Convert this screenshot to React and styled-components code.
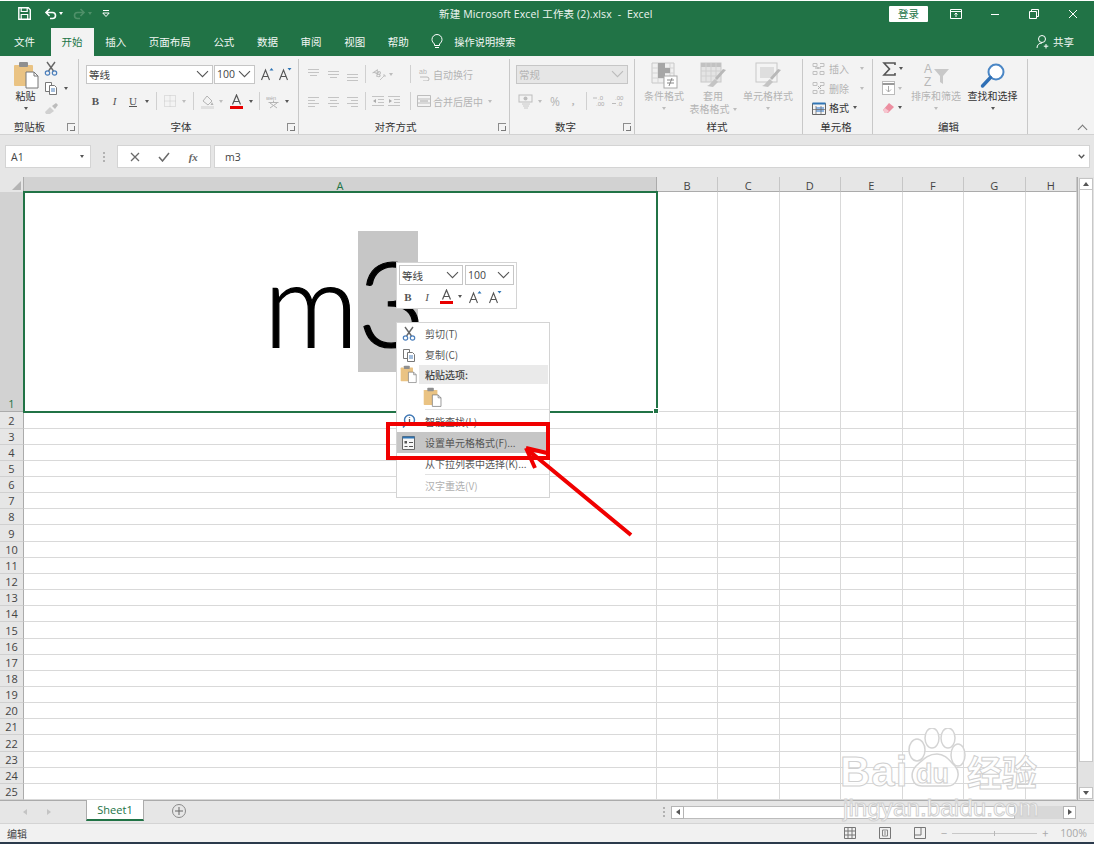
import React from "react";
import styled, { createGlobalStyle } from "styled-components";

const CJK = `"Noto Sans CJK SC", "Noto Sans", sans-serif`;
const GREEN = "#217346";
const DIM = "#b4b4b4";

const Global = createGlobalStyle`
  html, body { margin: 0; padding: 0; background: #fff; }
  body { font-family: ${CJK}; overflow: hidden; }
`;

const Page = styled.div`
  width: 1094px;
  height: 844px;
  padding-top: 1px;
  box-sizing: border-box;
  display: flex;
  flex-direction: column;
  position: relative;
  overflow: hidden;
`;

/* title bar */
const TitleBar = styled.div`
  height: 26px;
  background: ${GREEN};
  display: flex;
  align-items: center;
  position: relative;
  color: #fff;
  font-size: 10.5px;
`;
const QuickAccess = styled.div`
  display: flex;
  align-items: center;
  padding-left: 18px;
  gap: 5px;
`;
const DocTitle = styled.div`
  position: absolute;
  left: 439px;
  top: 5px;
  white-space: pre;
  line-height: 16px;
  letter-spacing: 0.15px;
  color: #eef5f0;
  font-family: "Open Sans", "Noto Sans CJK SC", sans-serif;
`;
const WindowControls = styled.div`
  margin-left: auto;
  display: flex;
  align-items: center;
  padding-right: 2px;
`;
const SignIn = styled.div`
  width: 39px;
  height: 16px;
  background: #fff;
  color: ${GREEN};
  font-size: 10.5px;
  line-height: 16px;
  text-align: center;
  margin-right: 8px;
  border-radius: 1px;
`;
const WinBtn = styled.div`
  width: 39px;
  display: flex;
  justify-content: center;
`;

/* tabs */
const TabBar = styled.div`
  height: 29px;
  background: ${GREEN};
  display: flex;
  align-items: flex-end;
  padding-left: 3px;
  gap: 0.6px;
  color: #f2f7f4;
  font-size: 10.5px;
`;
const Tab = styled.div`
  height: 28px;
  line-height: 28px;
  padding: 0 11px;
  margin-right: ${(p) => p.$mr || 0}px;
  background: ${(p) => (p.$active ? "#f3f3f3" : "transparent")};
  color: ${(p) => (p.$active ? GREEN : "inherit")};
`;
const TellMe = styled.div`
  display: flex;
  align-items: center;
  gap: 11px;
  height: 28px;
  margin-left: 11px;
  font-size: 10.2px;
`;
const Share = styled.div`
  margin-left: auto;
  margin-right: 20px;
  height: 28px;
  display: flex;
  align-items: center;
  gap: 3px;
`;

/* ribbon */
const Ribbon = styled.div`
  height: 80px;
  box-sizing: border-box;
  background: #f3f3f3;
  border-bottom: 1px solid #d2d2d2;
  display: flex;
  position: relative;
  font-size: 10px;
  color: #444;
`;
const Group = styled.div`
  width: ${(p) => p.$w}px;
  height: 75px;
  margin-top: 3px;
  box-sizing: border-box;
  border-right: 1px solid #c8c8c8;
  display: flex;
  flex-direction: column;
  flex: none;
`;
const GroupBody = styled.div`
  flex: 1;
  min-height: 0;
  display: flex;
  padding-left: ${(p) => p.$pl || 0}px;
`;
const GroupFoot = styled.div`
  height: 14px;
  display: grid;
  grid-template-columns: 1fr auto 1fr;
  align-items: center;
  font-size: 10.5px;
  color: #333;
  line-height: 14px;
  padding-right: 3px;
`;
const GroupName = styled.div`
  grid-column: 2;
  margin-right: ${(p) => (p.$shift || 0) * 2}px;
`;
const Launcher = styled.div`
  grid-column: 3;
  justify-self: end;
  width: 7px;
  height: 7px;
  border-left: 1px solid #8c8c8c;
  border-top: 1px solid #8c8c8c;
  &::after {
    content: "";
    display: block;
    width: 4px;
    height: 4px;
    margin: 2px 0 0 2px;
    border-right: 1px solid #7a7a7a;
    border-bottom: 1px solid #7a7a7a;
  }
`;
const Stack = styled.div`
  display: flex;
  flex-direction: column;
  padding-top: 6px;
  gap: 9px;
`;
const Row = styled.div`
  display: flex;
  align-items: center;
  height: ${(p) => p.$h || 17}px;
`;
const Combo = styled.div`
  width: ${(p) => p.$w}px;
  height: 19px;
  box-sizing: border-box;
  background: ${(p) => (p.$off ? "#e6e6e6" : "#fff")};
  border: 1px solid #c6c6c6;
  color: ${(p) => (p.$off ? DIM : "#444")};
  display: flex;
  align-items: center;
  justify-content: space-between;
  padding: 0 3px 0 2px;
  font-size: ${(p) => p.$fs || 10.5}px;
  margin-right: ${(p) => p.$mr ?? 0}px;
  flex: none;
`;
const Tool = styled.div`
  width: ${(p) => p.$w || 18}px;
  flex: none;
  display: flex;
  justify-content: center;
  align-items: center;
  font-family: "Liberation Serif", serif;
  font-size: 11px;
  font-weight: ${(p) => (p.$bold ? 700 : 400)};
  font-style: ${(p) => (p.$italic ? "italic" : "normal")};
  text-decoration: ${(p) => (p.$under ? "underline" : "none")};
  color: ${(p) => (p.$off ? DIM : "#555")};
`;
const PercentTool = styled(Tool)`
  font-family: "Open Sans", sans-serif;
  font-size: 12px;
`;
const Caret = styled.span`
  display: inline-block;
  width: 0;
  height: 0;
  border-left: 2.5px solid transparent;
  border-right: 2.5px solid transparent;
  border-top: 3px solid ${(p) => p.$c || (p.$off ? "#bdbdbd" : "#555")};
  margin: ${(p) => p.$m || "0"};
`;
const CaretBox = styled.div`
  width: ${(p) => p.$w || 10}px;
  flex: none;
  display: flex;
  justify-content: center;
`;
const Sep = styled.div`
  width: 1px;
  height: 18px;
  background: #d0d0d0;
  margin: 0 4px;
  flex: none;
`;
const Spacer = styled.div`
  width: ${(p) => p.$w}px;
  flex: ${(p) => (p.$grow ? 1 : "none")};
`;
const Dim = styled.span`
  color: ${DIM};
  white-space: nowrap;
  width: ${(p) => p.$w}px;
  flex: none;
`;
const BigBtn = styled.div`
  width: ${(p) => p.$w}px;
  flex: none;
  display: flex;
  flex-direction: column;
  align-items: center;
  padding-top: 3px;
  color: ${(p) => (p.$off ? DIM : "#333")};
  line-height: 13px;
  white-space: nowrap;
`;
const BigIcon = styled.div`
  height: 27px;
  display: flex;
  align-items: center;
  justify-content: center;
`;
const SmallCol = styled.div`
  display: flex;
  flex-direction: column;
  width: ${(p) => p.$w}px;
  flex: none;
`;
const SmallRow = styled.div`
  height: 19.5px;
  display: flex;
  align-items: center;
  gap: 3px;
  color: ${(p) => (p.$off ? DIM : "#333")};
  white-space: nowrap;
`;
const Collapse = styled.div`
  position: absolute;
  right: 8px;
  bottom: 1px;
  width: 6px;
  height: 6px;
  border-left: 1px solid #777;
  border-top: 1px solid #777;
  transform: rotate(45deg);
`;

/* formula bar */
const FormulaBar = styled.div`
  height: 42px;
  box-sizing: border-box;
  background: #e6e6e6;
  padding: 10px 4px 9px 5px;
  display: flex;
  align-items: stretch;
  font-size: 10.5px;
  color: #444;
`;
const FBox = styled.div`
  background: #fff;
  border: 1px solid #d4d4d4;
  box-sizing: border-box;
  display: flex;
  align-items: center;
  width: ${(p) => (p.$w ? `${p.$w}px` : "auto")};
  flex: ${(p) => (p.$w ? "none" : 1)};
  justify-content: ${(p) => p.$justify || "flex-start"};
  padding: ${(p) => p.$pad || "0"};
  margin-right: ${(p) => p.$mr || 0}px;
`;
const Grip = styled.div`
  width: 26px;
  flex: none;
  display: flex;
  flex-direction: column;
  align-items: center;
  justify-content: center;
  gap: 2px;
  i {
    width: 2px;
    height: 2px;
    background: #b2b2b2;
    display: block;
  }
`;
const LatinText = styled.span`
  font-family: "Open Sans", sans-serif;
  font-size: 10.5px;
`;
const FxLabel = styled.span`
  font-family: "Liberation Serif", serif;
  font-style: italic;
  font-size: 11px;
  font-weight: 700;
  color: #666;
`;

/* worksheet */
const Workspace = styled.div`
  height: 623px;
  display: flex;
  background: #e6e6e6;
`;
const Sheet = styled.div`
  width: 1078px;
  flex: none;
  display: grid;
  grid-template-columns: 24px 633px 61px 61.5px 61.5px 61.5px 61.5px 61.5px 51.5px;
  grid-template-rows: 15px 220px repeat(24, 16.167px);
  background: #fff;
  border-right: 1px solid #ababab;
  box-sizing: border-box;
`;
const Corner = styled.div`
  background: #e6e6e6;
  border-right: 1px solid #ababab;
  display: flex;
  align-items: flex-end;
  justify-content: flex-end;
  padding: 0 2px 2px 0;
  box-sizing: border-box;
  &::after {
    content: "";
    width: 0;
    height: 0;
    border-left: 9px solid transparent;
    border-bottom: 9px solid #b4b4b4;
  }
`;
const ColHead = styled.div`
  background: ${(p) => (p.$sel ? "#d2d2d2" : "#e6e6e6")};
  border-right: 1px solid ${(p) => (p.$sel ? "#ababab" : "#c6c6c6")};
  border-bottom: 1px solid #ababab;
  box-sizing: border-box;
  font-family: "Open Sans", sans-serif;
  font-size: 11px;
  line-height: 17px;
  text-align: center;
  color: ${(p) => (p.$sel ? GREEN : "#444")};
`;
const RowHead = styled.div`
  background: ${(p) => (p.$sel ? "#d2d2d2" : "#e6e6e6")};
  border-right: 1px solid #ababab;
  border-bottom: 1px solid ${(p) => (p.$sel ? "#ababab" : "#d0d0d0")};
  box-sizing: border-box;
  font-family: "Open Sans", sans-serif;
  font-size: 11px;
  color: ${(p) => (p.$sel ? GREEN : "#444")};
  display: flex;
  align-items: flex-end;
  justify-content: center;
  line-height: 15px;
  overflow: hidden;
`;
const Cell = styled.div`
  border-right: 1px solid #d9d9d9;
  border-bottom: 1px solid #d9d9d9;
  box-sizing: border-box;
`;
const ActiveCell = styled.div`
  grid-column: 2;
  border: 2px solid ${GREEN};
  margin: -1px;
  background: #fff;
  display: flex;
  align-items: center;
  justify-content: center;
  position: relative;
  z-index: 1;
  color: #000;
  font-family: "Lato", sans-serif;
  font-weight: 300;
  font-size: 118px;
  line-height: 141px;
  -webkit-text-stroke: 1.2px #000;
  &::after {
    content: "";
    position: absolute;
    right: -3px;
    bottom: -3px;
    width: 4px;
    height: 4px;
    background: ${GREEN};
    border: 1px solid #fff;
  }
`;
const CellText = styled.div`
  display: flex;
  margin: -2px 0 0 0;
`;
const Selected = styled.span`
  display: block;
  width: 60px;
  height: 141px;
  text-align: center;
  background: #c6c6c6;
  margin-left: -1px;
`;
const VScroll = styled.div`
  width: 16px;
  flex: none;
  background: #e2e2e2;
  display: flex;
  flex-direction: column;
  padding: 1px;
  box-sizing: border-box;
`;
const ScrollBtn = styled.div`
  height: 12px;
  background: #fff;
  border: 1px solid #c4c4c4;
  box-sizing: border-box;
  display: flex;
  align-items: center;
  justify-content: center;
  flex: none;
`;
const VThumb = styled.div`
  height: 572px;
  background: #fff;
  border: 1px solid #c8c8c8;
  border-top: 0;
  box-sizing: border-box;
  flex: none;
`;
const TriUp = styled.span`
  width: 0;
  height: 0;
  border-left: 3px solid transparent;
  border-right: 3px solid transparent;
  border-bottom: 4px solid #555;
`;
const TriDown = styled(TriUp)`
  border-bottom: 0;
  border-top: 4px solid #555;
`;
const TriLeft = styled.span`
  width: 0;
  height: 0;
  border-top: 3px solid transparent;
  border-bottom: 3px solid transparent;
  border-right: 4px solid ${(p) => p.$c || "#555"};
`;
const TriRight = styled.span`
  width: 0;
  height: 0;
  border-top: 3px solid transparent;
  border-bottom: 3px solid transparent;
  border-left: 4px solid ${(p) => p.$c || "#555"};
`;

/* sheet tabs + status */
const SheetBar = styled.div`
  height: 23px;
  box-sizing: border-box;
  background: #e6e6e6;
  border-top: 1px solid #ababab;
  display: flex;
  align-items: flex-start;
`;
const SheetNav = styled.div`
  width: 86px;
  flex: none;
  height: 22px;
  display: flex;
  align-items: center;
  padding-left: 23px;
  gap: 20px;
  box-sizing: border-box;
`;
const SheetTab = styled.div`
  width: 58px;
  height: 21px;
  flex: none;
  margin-top: -1px;
  box-sizing: border-box;
  background: #fff;
  border-left: 1px solid #ababab;
  border-right: 1px solid #ababab;
  border-bottom: 2px solid ${GREEN};
  color: ${GREEN};
  font-family: "Open Sans", sans-serif;
  font-size: 11px;
  line-height: 20px;
  text-align: center;
`;
const AddSheet = styled.div`
  margin-left: 28px;
  margin-top: 3px;
  width: 14px;
  height: 14px;
  flex: none;
  border: 1px solid #8a8a8a;
  border-radius: 50%;
  box-sizing: border-box;
  display: flex;
  align-items: center;
  justify-content: center;
`;
const HScrollWrap = styled.div`
  margin-left: auto;
  display: flex;
  align-items: center;
  height: 22px;
  padding-right: 18px;
`;
const HGrip = styled(Grip)`
  width: 14px;
`;
const HScroll = styled.div`
  width: 405px;
  height: 13px;
  background: #d8d8d8;
  display: flex;
  align-items: stretch;
`;
const HBtn = styled.div`
  width: 13px;
  flex: none;
  background: #fff;
  border: 1px solid #b4b4b4;
  box-sizing: border-box;
  display: flex;
  align-items: center;
  justify-content: center;
`;
const HThumb = styled.div`
  width: 331px;
  flex: none;
  background: #fff;
  border: 1px solid #bcbcbc;
  border-left: 0;
  box-sizing: border-box;
`;
const StatusBar = styled.div`
  height: 19px;
  box-sizing: border-box;
  background: #f1f1f1;
  border-top: 1px solid #d4d4d4;
  display: flex;
  align-items: center;
  padding-left: 7px;
  font-size: 10px;
  color: #444;
`;
const ViewIcons = styled.div`
  margin-left: auto;
  display: flex;
  align-items: center;
  gap: 23px;
  margin-right: 15px;
`;
const ZoomCtl = styled.div`
  display: flex;
  align-items: center;
  color: #aaa;
  font-size: 11px;
  padding-right: 7px;
`;
const ZoomTrack = styled.div`
  width: 85px;
  height: 1px;
  background: #c8c8c8;
  margin: 0 5px;
  position: relative;
  &::after {
    content: "";
    position: absolute;
    left: 42px;
    top: -2px;
    width: 1px;
    height: 5px;
    background: #b8b8b8;
  }
`;
const ZoomPct = styled.span`
  font-family: "Open Sans", sans-serif;
  font-size: 10.5px;
  margin-left: 12px;
  color: #a8a8a8;
`;
const BottomEdge = styled.div`
  height: 2px;
  background: #2b3a4c;
`;

/* mini toolbar */
const MiniBar = styled.div`
  position: absolute;
  left: 396px;
  top: 262px;
  width: 121px;
  height: 47px;
  box-sizing: border-box;
  background: #fff;
  border: 1px solid #d4d4d4;
  padding: 2px;
  z-index: 3;
  font-size: 10.5px;
  color: #444;
  display: flex;
  flex-direction: column;
  gap: 3px;
`;
const MiniRow = styled.div`
  display: flex;
  align-items: center;
  height: ${(p) => p.$h || 17}px;
`;
const MiniCombo = styled(Combo)`
  height: 20px;
  margin-right: 2px;
`;

/* context menu */
const Menu = styled.div`
  position: absolute;
  left: 396px;
  top: 322px;
  width: 154px;
  height: 176px;
  box-sizing: border-box;
  background: #fff;
  border: 1px solid #d4d4d4;
  z-index: 3;
  font-size: 10px;
  color: #555;
`;
const MenuItem = styled.div`
  height: ${(p) => p.$h || 21}px;
  display: flex;
  align-items: center;
  background: ${(p) => (p.$hi ? "#c6c6c6" : "transparent")};
  color: ${(p) => (p.$off ? "#b0b0b0" : "inherit")};
  white-space: nowrap;
`;
const MenuIcon = styled.div`
  width: 21px;
  flex: none;
  display: flex;
  justify-content: center;
  padding-left: 1px;
`;
const MenuText = styled.span`
  margin-left: 6px;
  flex: 1;
`;
const MenuHead = styled.div`
  flex: 1;
  align-self: stretch;
  display: flex;
  align-items: center;
  background: #eaeaea;
  padding-left: 6px;
  margin-right: 1px;
  font-weight: 500;
  color: #444;
`;
const PasteSlot = styled.div`
  padding: 3px 0 0 26px;
  height: 25px;
  box-sizing: border-box;
`;
const MenuSep = styled.div`
  height: 1px;
  margin-left: 28px;
  background: #e2e2e2;
`;

/* annotations */
const RedBox = styled.div`
  position: absolute;
  left: 386px;
  top: 422px;
  width: 164px;
  height: 38px;
  box-sizing: border-box;
  border: 4px solid #f00000;
  z-index: 4;
`;
const Annotation = styled.svg`
  position: absolute;
  left: 515px;
  top: 440px;
  z-index: 5;
`;
const Watermark = styled.div`
  position: absolute;
  left: 840px;
  top: 728px;
  width: 200px;
  height: 96px;
  z-index: 6;
  pointer-events: none;
  color: rgba(255, 255, 255, 0.85);
  -webkit-text-stroke: 1px #d0d0d0;
  font-family: "Liberation Sans", sans-serif;
  font-weight: 700;
`;
const Paw = styled.svg`
  position: absolute;
  left: 60px;
  top: 0;
`;
const WmBai = styled.span`
  position: absolute;
  left: 0;
  top: 20px;
  font-size: 42px;
  line-height: 48px;
  letter-spacing: 1px;
`;
const WmDu = styled.span`
  position: absolute;
  left: 76px;
  top: 31px;
  font-size: 27px;
  line-height: 30px;
`;
const WmJy = styled.span`
  position: absolute;
  left: 127px;
  top: 22px;
  font-family: ${CJK};
  font-size: 35px;
  line-height: 42px;
  white-space: nowrap;
`;
const WmUrl = styled.span`
  position: absolute;
  left: 3px;
  top: 66px;
  font-size: 24.3px;
  line-height: 28px;
  font-weight: 400;
  white-space: nowrap;
`;

/* icons */
const Svg = ({ w = 14, h = 14, children }) => (
  <svg width={w} height={h} viewBox={`0 0 ${w} ${h}`} fill="none">
    {children}
  </svg>
);
const Lines = ({ kind, c = "#c4c4c4" }) => {
  const rows = {
    top: [[1, 12, 2], [1, 12, 5], [3, 10, 8]],
    mid: [[1, 12, 4], [1, 12, 7], [3, 10, 10]],
    bot: [[1, 12, 7], [1, 12, 10], [1, 12, 13]],
    left: [[1, 12, 3], [1, 8, 6], [1, 12, 9], [1, 8, 12]],
    center: [[1, 12, 3], [3, 10, 6], [1, 12, 9], [3, 10, 12]],
    right: [[1, 12, 3], [5, 12, 6], [1, 12, 9], [5, 12, 12]],
  }[kind];
  return (
    <Svg>
      {rows.map(([a, b, y], i) => (
        <path key={i} d={`M${a} ${y + 0.5}H${b}`} stroke={c} />
      ))}
    </Svg>
  );
};
const Clipboard = ({ s = 1 }) => (
  <svg width={26 * s} height={28 * s} viewBox="0 0 26 28">
    <rect x="1" y="4" width="19" height="21" rx="1" fill="#eac383" />
    <rect x="6" y="1" width="9" height="5" rx="1" fill="#8f8f8f" />
    <path d="M13 11h8l4 4v12H13z" fill="#fff" stroke="#777" />
    <path d="M21 11v4h4" stroke="#777" fill="none" />
  </svg>
);
const Scissors = ({ c = "#4a7ebb" }) => (
  <Svg w={14} h={15}>
    <path d="M3 1l6.5 9M11 1L4.5 10" stroke="#666" strokeWidth="1.4" />
    <circle cx="3.5" cy="12" r="2.2" stroke={c} strokeWidth="1.2" />
    <circle cx="10.5" cy="12" r="2.2" stroke={c} strokeWidth="1.2" />
  </Svg>
);
const CopyIcon = () => (
  <Svg w={14} h={14}>
    <path d="M1.5 1.5h6v9h-6z" stroke="#777" fill="#fff" />
    <path d="M5.5 4.5h5l2 2v7h-7z" stroke="#777" fill="#fff" />
    <path d="M7 8h4M7 10h4" stroke="#4a7ebb" />
  </Svg>
);
const Brush = () => (
  <Svg w={15} h={14}>
    <path d="M1 11l5-5 4 4-4 3H2z" fill="#d0d0d0" />
    <path d="M8 5l4-3 2 2-3 4z" fill="#bcbcbc" />
  </Svg>
);
const GrowFont = ({ down }) => (
  <Svg w={14} h={14}>
    <path d="M1.5 13L5.5 3l4 10M3 9.5h5" stroke="#555" strokeWidth="1.1" />
    <path d={down ? "M9.5 1h4L11.5 3.5z" : "M9.5 3.5h4L11.5 1z"} fill="#2f75b5" />
  </Svg>
);
const Borders = () => (
  <Svg>
    <path d="M1.5 1.5h11v11h-11zM7 1.5v11M1.5 7h11" stroke="#c8c8c8" strokeDasharray="1 1" />
  </Svg>
);
const FillIcon = () => (
  <Svg w={15} h={15}>
    <path d="M3 7l4-5 5 5-4 4z" stroke={DIM} fill="#f3f3f3" />
    <path d="M12 8l1.5 3h-3z" fill={DIM} />
    <rect x="1" y="12" width="13" height="3" fill="#e0e0e0" />
  </Svg>
);
const FontColor = () => (
  <Svg w={15} h={15}>
    <path d="M3.500 10.500L7.500 1l4 9.500M5 7.500h5" stroke="#555" strokeWidth="1.2" />
    <rect x="1" y="12" width="13" height="3" fill="#e80000" />
  </Svg>
);
const Phonetic = () => (
  <Svg w={15} h={15}>
    <text x="0" y="5.5" fontSize="5.5" fill="#aaa" fontFamily="Liberation Sans">wén</text>
    <path d="M7.5 6.5v1.5M2.5 8.5h10M4 9l7 5M11 9l-7 5" stroke="#b4b4b4" />
  </Svg>
);
const Orient = () => (
  <Svg w={15} h={14}>
    <path d="M2 8l3-5 2 5M3 6.500h3M7 9V4c2-1 3 1 1.500 2.500C10.500 6 11 9 7 9z" stroke="#bbb" transform="rotate(25 6 6)" />
    <path d="M9 13l5-5M12 8h2v2" stroke="#c4c4c4" />
  </Svg>
);
const Indent = ({ back }) => (
  <Svg>
    <path d="M1 2.5h12M7 5.5h6M7 8.5h6M1 11.5h12" stroke="#c4c4c4" />
    <path d={back ? "M5 5l-3 2 3 2z" : "M2 5l3 2-3 2z"} fill="#aaa" />
  </Svg>
);
const WrapIcon = () => (
  <Svg w={13} h={13}>
    <text x="1" y="6" fontSize="7" fill="#b8b8b8" fontFamily="Liberation Sans">ab</text>
    <path d="M2 9h7a2 2 0 010 4H5" stroke="#b8b8b8" />
  </Svg>
);
const MergeIcon = () => (
  <Svg w={14} h={12}>
    <path d="M.5.5h13v11H.5zM.5 4h13M.5 8h13" stroke="#bdbdbd" />
    <path d="M3 6h8" stroke="#aaa" />
  </Svg>
);
const Money = () => (
  <Svg w={15} h={15}>
    <rect x="1" y="1" width="13" height="7" stroke="#bdbdbd" />
    <circle cx="7.5" cy="4.5" r="2" fill="#bdbdbd" />
    <path d="M4 10h8M5 12h6M6 14h4" stroke="#c8c8c8" />
  </Svg>
);
const Decimal = ({ flip }) => (
  <svg width="14" height="12" viewBox="0 0 14 12">
    <text x={flip ? 4 : 6} y="5" fontSize="6" fill="#aaa" fontFamily="Liberation Sans">{flip ? ".00" : ".0"}</text>
    <text x={flip ? 6 : 4} y="11" fontSize="6" fill="#aaa" fontFamily="Liberation Sans">{flip ? ".0" : ".00"}</text>
    <path d={flip ? "M1 8.5h4" : "M1 3h4"} stroke="#bbb" />
  </svg>
);
const CondFormat = () => (
  <svg width="27" height="27" viewBox="0 0 27 27">
    <path d="M1 1h22v20H1z" fill="#f0f0f0" stroke="#c8c8c8" />
    <path d="M7 1v20M13 1v20M19 1v20M1 6h22M1 11h22M1 16h22" stroke="#d4d4d4" />
    <rect x="7" y="1" width="7" height="15" fill="#a6a6a6" />
    <rect x="14" y="6" width="5" height="5" fill="#a6a6a6" />
    <rect x="13" y="14" width="13" height="12" fill="#fff" stroke="#a8a8a8" />
    <path d="M16 18h7M16 21h7M21 16l-3 8" stroke="#888" />
  </svg>
);
const TableFormat = () => (
  <svg width="27" height="27" viewBox="0 0 27 27">
    <rect x="1" y="1" width="20" height="19" fill="#e4e4e4" stroke="#c8c8c8" />
    <rect x="1" y="1" width="20" height="4" fill="#c2c2c2" />
    <path d="M6 1v19M11 1v19M16 1v19M1 9h20M1 14h20" stroke="#d0d0d0" />
    <path d="M26 8l-9 10-2-2 8-9z" fill="#b8b8b8" />
    <path d="M15 17l3 3-5 5-6-1c3-1 4-4 8-7z" fill="#c4c4c4" />
  </svg>
);
const CellStyle = () => (
  <svg width="27" height="27" viewBox="0 0 27 27">
    <rect x="1" y="1" width="21" height="19" fill="#f4f4f4" stroke="#c8c8c8" />
    <rect x="5" y="5" width="14" height="11" fill="#dedede" />
    <path d="M26 8l-9 10-2-2 8-9z" fill="#b8b8b8" />
    <path d="M15 17l3 3-5 5-6-1c3-1 4-4 8-7z" fill="#c4c4c4" />
  </svg>
);
const CellOp = ({ kind }) => (
  <Svg w={14} h={14}>
    <path d="M1 1.5h4M1 1.5v3h4v-3M8 1.5h4v3H8M1 9.5h4v3H1zM8 9.5h4v3H8z" stroke="#c0c0c0" />
    {kind === "ins" && <path d="M3 6h6M6 5v2" stroke="#b0b0b0" />}
    {kind === "del" && <path d="M6 5l3 3M9 5L6 8" stroke="#b0b0b0" />}
  </Svg>
);
const FormatCells = () => (
  <Svg w={14} h={14}>
    <path d="M.5 2.5h13v11H.5z" stroke="#666" />
    <path d="M.5 2.5h13" stroke="#2f75b5" strokeWidth="2" />
    <rect x="4" y="6" width="8" height="5" fill="#8db4e2" />
    <path d="M4 5v8M9 5v8M1 8.5h12" stroke="#666" strokeWidth=".7" />
  </Svg>
);
const Sigma = () => (
  <Svg w={14} h={14}>
    <path d="M13 3V1H2l5.5 6L2 13h11v-2" stroke="#555" strokeWidth="1.6" />
  </Svg>
);
const FillDown = () => (
  <Svg w={13} h={14}>
    <rect x=".5" y=".5" width="12" height="13" stroke="#bbb" fill="#fff" />
    <path d="M.5 3h12" stroke="#999" strokeWidth="2" />
    <path d="M6.5 5v6M4 8.5l2.5 2.5L9 8.5" stroke="#a8a8a8" />
  </Svg>
);
const Eraser = () => (
  <Svg w={13} h={12}>
    <path d="M1 8l6-7 5 4-6 6H3z" fill="#ec8ea0" />
    <path d="M1 8l2-2 4 3-2 2H3z" fill="#f6c5cf" />
  </Svg>
);
const SortFilter = () => (
  <svg width="28" height="27" viewBox="0 0 28 27">
    <text x="2" y="11" fontSize="12" fill="#b8b8b8" fontFamily="Liberation Sans">A</text>
    <text x="2" y="24" fontSize="12" fill="#b8b8b8" fontFamily="Liberation Sans">Z</text>
    <path d="M12 7h15l-6 7v8l-3-2v-6z" fill="#c8c8c8" />
  </svg>
);
const Magnifier = () => (
  <svg width="26" height="27" viewBox="0 0 26 27">
    <circle cx="16" cy="10" r="7.5" stroke="#4a86c5" strokeWidth="2" fill="#fff" />
    <path d="M10.5 15.5L2.5 24" stroke="#2f6fb5" strokeWidth="3.4" strokeLinecap="round" />
  </svg>
);
const Lightbulb = () => (
  <Svg w={12} h={15}>
    <path d="M3.5 10C2 8.6 1 7.4 1 5.5a5 5 0 0110 0c0 1.9-1 3.1-2.5 4.5v1.5h-5z" stroke="#fff" />
    <path d="M4 13.5h4" stroke="#fff" />
  </Svg>
);
const SaveIcon = () => (
  <Svg w={13} h={13}>
    <path d="M.8.8h9.5l2 2v9.4H.8z" stroke="#fff" strokeWidth="1.4" />
    <path d="M3.2 1v3.5h6V1M3.2 12V7.5h6.5V12" stroke="#fff" strokeWidth="1.2" />
  </Svg>
);
const UndoIcon = ({ c = "#fff" }) => (
  <Svg w={13} h={12}>
    <path d="M3 4.5h5.5a3 3 0 010 6H6M5.5 1L2 4.5 5.5 8" stroke={c} strokeWidth="1.6" />
  </Svg>
);
const RedoIcon = ({ c }) => (
  <Svg w={13} h={12}>
    <path d="M10 4.5H4.500a3 3 0 000 6H7M7.500 1L11 4.500 7.500 8" stroke={c} strokeWidth="1.6" />
  </Svg>
);
const CustomizeIcon = () => (
  <Svg w={8} h={8}>
    <path d="M1 .5h6" stroke="#fff" />
    <path d="M.8 3h6.4L4 6.5z" stroke="#fff" />
  </Svg>
);
const RibbonMode = () => (
  <Svg w={12} h={10}>
    <path d="M.5.5h11v9H.5zM.5 2.5h11" stroke="#fff" />
    <path d="M6 8V4M4.5 5.5L6 4l1.5 1.5" stroke="#fff" />
  </Svg>
);
const MinIcon = () => (
  <Svg w={10} h={10}><path d="M1 5.5h8" stroke="#fff" /></Svg>
);
const RestoreIcon = () => (
  <Svg w={10} h={10}><path d="M.5 2.5h7v7h-7zM2.5 2.5v-2h7v7h-2" stroke="#fff" /></Svg>
);
const CloseIcon = () => (
  <Svg w={10} h={10}><path d="M1 1l8 8M9 1l-8 8" stroke="#fff" /></Svg>
);
const ShareIcon = () => (
  <Svg w={14} h={15}>
    <circle cx="6" cy="5" r="3.5" stroke="#fff" />
    <path d="M1 14c0-3 2-5 5-5M10 10v4.5M7.8 12.2h4.5" stroke="#fff" />
  </Svg>
);
const Chevron = ({ c = "#555" }) => (
  <Svg w={13} h={8}>
    <path d="M1 1.2l5.5 5.5L12 1.2" stroke={c} strokeWidth="1.1" />
  </Svg>
);
const SmallChevron = () => (
  <Svg w={7} h={5}>
    <path d="M.7.8L3.500 3.800 6.300.8" stroke="#555" strokeWidth="1.3" />
  </Svg>
);
const CrossMark = () => (
  <Svg w={10} h={10}><path d="M1 1l8 8M9 1l-8 8" stroke="#6a6a6a" strokeWidth="1.3" /></Svg>
);
const CheckMark = () => (
  <Svg w={12} h={10}><path d="M1 5l3.5 4L11 1" stroke="#6a6a6a" strokeWidth="1.5" /></Svg>
);
const HelpSearch = () => (
  <Svg w={14} h={15}>
    <circle cx="7.5" cy="6" r="5" stroke="#3f78b5" strokeWidth="1.4" fill="#fff" />
    <path d="M7.5 3v.8M7.5 5v3.5" stroke="#555" strokeWidth="1.3" />
    <path d="M4 10l-3 3.5" stroke="#3f78b5" strokeWidth="1.6" />
  </Svg>
);
const FormatDialog = () => (
  <Svg w={13} h={14}>
    <path d="M.5.5h12v13H.5z" stroke="#666" fill="#f6f6f6" />
    <path d="M.5 1.5h12" stroke="#2f75b5" strokeWidth="2" />
    <rect x="2.5" y="5" width="2.5" height="2.5" fill="#555" />
    <path d="M7 6.5h4M7 10.5h4M2.5 10.5h3" stroke="#555" />
  </Svg>
);
const ViewNormal = () => (
  <Svg w={12} h={12}>
    <path d="M.5.5h11v11H.5zM4 .5v11M8 .5v11M.5 4h11M.5 8h11" stroke="#777" />
  </Svg>
);
const ViewPage = () => (
  <Svg w={12} h={12}>
    <path d="M.5.5h11v11H.5z" stroke="#777" />
    <path d="M3.5 3h5v6h-5zM5 5h2M5 7h2" stroke="#888" />
  </Svg>
);
const ViewBreak = () => (
  <Svg w={12} h={12}>
    <path d="M.5.5h11v11H.5zM.5 8h6.500V.5" stroke="#777" />
  </Svg>
);

const COLUMNS = ["B", "C", "D", "E", "F", "G", "H"];
const ROWS = Array.from({ length: 24 }, (_, i) => i + 2);

export default function App() {
  return (
    <Page>
      <Global />
      <TitleBar>
        <QuickAccess>
          <SaveIcon />
          <Spacer $w={3} />
          <UndoIcon />
          <Caret $m="0 5px 0 -3px" $c="#fff" />
          <RedoIcon c="#4f9069" />
          <Caret $m="0 5px 0 -3px" $c="#4f9069" />
          <CustomizeIcon />
        </QuickAccess>
        <DocTitle>新建 Microsoft Excel 工作表 (2).xlsx  -  Excel</DocTitle>
        <WindowControls>
          <SignIn>登录</SignIn>
          <WinBtn><RibbonMode /></WinBtn>
          <WinBtn><MinIcon /></WinBtn>
          <WinBtn><RestoreIcon /></WinBtn>
          <WinBtn><CloseIcon /></WinBtn>
        </WindowControls>
      </TitleBar>

      <TabBar>
        <Tab $mr={4}>文件</Tab>
        <Tab $active>开始</Tab>
        <Tab>插入</Tab>
        <Tab>页面布局</Tab>
        <Tab>公式</Tab>
        <Tab>数据</Tab>
        <Tab>审阅</Tab>
        <Tab>视图</Tab>
        <Tab>帮助</Tab>
        <TellMe><Lightbulb />操作说明搜索</TellMe>
        <Share><ShareIcon />共享</Share>
      </TabBar>

      <Ribbon>
        <Group $w={79}>
          <GroupBody $pl={13}>
            <BigBtn $w={25}>
              <BigIcon><Clipboard /></BigIcon>
              粘贴
              <Caret $m="5px 0 0" />
            </BigBtn>
            <Spacer $w={6} />
            <SmallCol $w={32}>
              <SmallRow><Scissors /></SmallRow>
              <SmallRow><CopyIcon /><Caret $m="0 0 0 3px" /></SmallRow>
              <SmallRow><Brush /></SmallRow>
            </SmallCol>
          </GroupBody>
          <GroupFoot><GroupName $shift={8}>剪贴板</GroupName><Launcher /></GroupFoot>
        </Group>

        <Group $w={220}>
          <GroupBody $pl={7}>
            <Stack>
              <Row $h={19}>
                <Combo $w={127} $mr={1}>等线<Chevron /></Combo>
                <Combo $w={41} $mr={3}><LatinText>100</LatinText><Chevron /></Combo>
                <Tool $w={18}><GrowFont /></Tool>
                <Tool $w={18}><GrowFont down /></Tool>
              </Row>
              <Row>
                <Tool $w={19} $bold>B</Tool>
                <Tool $w={19} $italic>I</Tool>
                <Tool $w={18} $under>U</Tool>
                <CaretBox><Caret /></CaretBox>
                <Sep />
                <Tool><Borders /></Tool>
                <CaretBox><Caret $off /></CaretBox>
                <Sep />
                <Tool><FillIcon /></Tool>
                <CaretBox $w={9}><Caret $off /></CaretBox>
                <Tool $w={22}><FontColor /></Tool>
                <CaretBox $w={8}><Caret /></CaretBox>
                <Sep />
                <Tool><Phonetic /></Tool>
                <CaretBox $w={9}><Caret /></CaretBox>
              </Row>
            </Stack>
          </GroupBody>
          <GroupFoot><GroupName $shift={6}>字体</GroupName><Launcher /></GroupFoot>
        </Group>

        <Group $w={211}>
          <GroupBody $pl={5}>
            <Stack>
              <Row $h={19}>
                <Tool $w={20}><Lines kind="top" /></Tool>
                <Tool $w={20}><Lines kind="mid" /></Tool>
                <Tool $w={17}><Lines kind="bot" /></Tool>
                <Sep />
                <Tool $w={16}><Orient /></Tool>
                <CaretBox $w={9}><Caret $off /></CaretBox>
                <Spacer $w={11} />
                <Sep />
                <Tool $w={18}><WrapIcon /></Tool>
                <Dim>自动换行</Dim>
              </Row>
              <Row>
                <Tool $w={20}><Lines kind="left" /></Tool>
                <Tool $w={20}><Lines kind="center" /></Tool>
                <Tool $w={17}><Lines kind="right" /></Tool>
                <Sep />
                <Tool $w={16}><Indent back /></Tool>
                <Tool $w={16}><Indent /></Tool>
                <Spacer $w={4} />
                <Sep />
                <Tool $w={18}><MergeIcon /></Tool>
                <Dim $w={55}>合并后居中</Dim>
                <Caret $off />
              </Row>
            </Stack>
          </GroupBody>
          <GroupFoot><GroupName $shift={7}>对齐方式</GroupName><Launcher /></GroupFoot>
        </Group>

        <Group $w={125}>
          <GroupBody $pl={6}>
            <Stack>
              <Row $h={19}>
                <Combo $w={112} $off>常规<Chevron c="#bbb" /></Combo>
              </Row>
              <Row>
                <Tool><Money /></Tool>
                <CaretBox $w={12}><Caret $off /></CaretBox>
                <PercentTool $off>%</PercentTool>
                <Tool $off $bold>,</Tool>
                <Sep />
                <Tool $w={16}><Decimal /></Tool>
                <Tool $w={22}><Decimal flip /></Tool>
              </Row>
            </Stack>
          </GroupBody>
          <GroupFoot><GroupName $shift={5}>数字</GroupName><Launcher /></GroupFoot>
        </Group>

        <Group $w={168}>
          <GroupBody $pl={5}>
            <BigBtn $w={48} $off>
              <BigIcon><CondFormat /></BigIcon>
              条件格式
              <Caret $off $m="5px 0 0" />
            </BigBtn>
            <BigBtn $w={50} $off>
              <BigIcon><TableFormat /></BigIcon>
              套用
              <span>表格格式<Caret $off $m="0 0 2px 3px" /></span>
            </BigBtn>
            <BigBtn $w={60} $off>
              <BigIcon><CellStyle /></BigIcon>
              单元格样式
              <Caret $off $m="5px 0 0" />
            </BigBtn>
          </GroupBody>
          <GroupFoot><GroupName>样式</GroupName></GroupFoot>
        </Group>

        <Group $w={70}>
          <GroupBody $pl={9}>
            <SmallCol $w={58}>
              <SmallRow $off><CellOp kind="ins" />插入<Caret $off $m="0 0 0 8px" /></SmallRow>
              <SmallRow $off><CellOp kind="del" />删除<Caret $off $m="0 0 0 8px" /></SmallRow>
              <SmallRow><FormatCells />格式<Caret $m="0 0 0 1px" /></SmallRow>
            </SmallCol>
          </GroupBody>
          <GroupFoot><GroupName>单元格</GroupName></GroupFoot>
        </Group>

        <Group $w={155}>
          <GroupBody $pl={9}>
            <SmallCol $w={24}>
              <SmallRow><Sigma /><Caret /></SmallRow>
              <SmallRow><FillDown /><Caret $off /></SmallRow>
              <SmallRow><Eraser /><Caret /></SmallRow>
            </SmallCol>
            <BigBtn $w={60} $off>
              <BigIcon><SortFilter /></BigIcon>
              排序和筛选
              <Caret $off $m="5px 0 0" />
            </BigBtn>
            <BigBtn $w={53}>
              <BigIcon><Magnifier /></BigIcon>
              查找和选择
              <Caret $m="5px 0 0" />
            </BigBtn>
          </GroupBody>
          <GroupFoot><GroupName>编辑</GroupName></GroupFoot>
        </Group>
        <Collapse />
      </Ribbon>

      <FormulaBar>
        <FBox $w={86} $justify="space-between" $pad="0 6px 0 5px">
          <LatinText>A1</LatinText>
          <Caret />
        </FBox>
        <Grip><i /><i /><i /></Grip>
        <FBox $w={94} $justify="space-around" $pad="0 3px" $mr={3}>
          <CrossMark />
          <CheckMark />
          <FxLabel>fx</FxLabel>
        </FBox>
        <FBox $justify="space-between" $pad="0 4px 0 10px">
          <LatinText>m3</LatinText>
          <SmallChevron />
        </FBox>
      </FormulaBar>

      <Workspace>
        <Sheet>
          <Corner />
          <ColHead $sel>A</ColHead>
          {COLUMNS.map((c) => (
            <ColHead key={c}>{c}</ColHead>
          ))}
          <RowHead $sel>1</RowHead>
          <ActiveCell>
            <CellText>m<Selected>3</Selected></CellText>
          </ActiveCell>
          {COLUMNS.map((c) => (
            <Cell key={c} />
          ))}
          {ROWS.map((r) => (
            <React.Fragment key={r}>
              <RowHead>{r}</RowHead>
              <Cell />
              {COLUMNS.map((c) => (
                <Cell key={c} />
              ))}
            </React.Fragment>
          ))}
        </Sheet>
        <VScroll>
          <ScrollBtn><TriUp /></ScrollBtn>
          <VThumb />
          <Spacer $w={1} $grow />
          <ScrollBtn><TriDown /></ScrollBtn>
        </VScroll>
      </Workspace>

      <SheetBar>
        <SheetNav>
          <TriLeft $c="#c4c4c4" />
          <TriRight $c="#c4c4c4" />
        </SheetNav>
        <SheetTab>Sheet1</SheetTab>
        <AddSheet>
          <Svg w={8} h={8}><path d="M4 0v8M0 4h8" stroke="#666" /></Svg>
        </AddSheet>
        <HScrollWrap>
          <HGrip><i /><i /><i /></HGrip>
          <HScroll>
            <HBtn><TriLeft /></HBtn>
            <HThumb />
            <Spacer $w={48} />
            <HBtn><TriRight /></HBtn>
          </HScroll>
        </HScrollWrap>
      </SheetBar>

      <StatusBar>
        编辑
        <ViewIcons>
          <ViewNormal />
          <ViewPage />
          <ViewBreak />
        </ViewIcons>
        <ZoomCtl>
          −<ZoomTrack />+
          <ZoomPct>100%</ZoomPct>
        </ZoomCtl>
      </StatusBar>
      <BottomEdge />

      <MiniBar>
        <MiniRow $h={20}>
          <MiniCombo $w={64}>等线<Chevron /></MiniCombo>
          <MiniCombo $w={49}><LatinText>100</LatinText><Chevron /></MiniCombo>
        </MiniRow>
        <MiniRow>
          <Tool $w={18} $bold>B</Tool>
          <Tool $w={20} $italic>I</Tool>
          <Tool $w={18}><FontColor /></Tool>
          <CaretBox><Caret /></CaretBox>
          <Tool $w={20}><GrowFont /></Tool>
          <Tool $w={20}><GrowFont down /></Tool>
        </MiniRow>
      </MiniBar>

      <Menu>
        <MenuItem><MenuIcon><Scissors /></MenuIcon><MenuText>剪切(T)</MenuText></MenuItem>
        <MenuItem><MenuIcon><CopyIcon /></MenuIcon><MenuText>复制(C)</MenuText></MenuItem>
        <MenuItem $h={19}>
          <MenuIcon><Clipboard s={0.65} /></MenuIcon>
          <MenuHead>粘贴选项:</MenuHead>
        </MenuItem>
        <PasteSlot><Clipboard s={0.72} /></PasteSlot>
        <MenuSep />
        <MenuItem $h={22}><MenuIcon><HelpSearch /></MenuIcon><MenuText>智能查找(L)</MenuText></MenuItem>
        <MenuItem $hi><MenuIcon><FormatDialog /></MenuIcon><MenuText>设置单元格格式(F)...</MenuText></MenuItem>
        <MenuItem><MenuIcon /><MenuText>从下拉列表中选择(K)...</MenuText></MenuItem>
        <MenuSep />
        <MenuItem $off><MenuIcon /><MenuText>汉字重选(V)</MenuText></MenuItem>
      </Menu>

      <RedBox />
      <Annotation width="130" height="100" viewBox="515 440 130 100">
        <path d="M631 535L528 450M526 448l21 5M526 448l9 20" stroke="#f00000" strokeWidth="4" fill="none" />
      </Annotation>

      <Watermark>
        <Paw width="80" height="66" viewBox="0 0 80 66">
          <g fill="rgba(255,255,255,.7)" stroke="#d4d4d4" strokeWidth="1.5">
            <ellipse cx="17" cy="22" rx="8" ry="11" />
            <ellipse cx="32" cy="10" rx="7" ry="10" />
            <ellipse cx="48" cy="10" rx="7" ry="10" />
            <ellipse cx="58" cy="27" rx="7" ry="11" />
            <path d="M37 26c8 0 12 6 18 12 6 7 3 20-8 20H22c-10 0-13-12-6-20 7-6 11-12 21-12z" />
          </g>
        </Paw>
        <WmBai>Bai</WmBai>
        <WmDu>du</WmDu>
        <WmJy>经验</WmJy>
        <WmUrl>jingyan.baidu.com</WmUrl>
      </Watermark>
    </Page>
  );
}
